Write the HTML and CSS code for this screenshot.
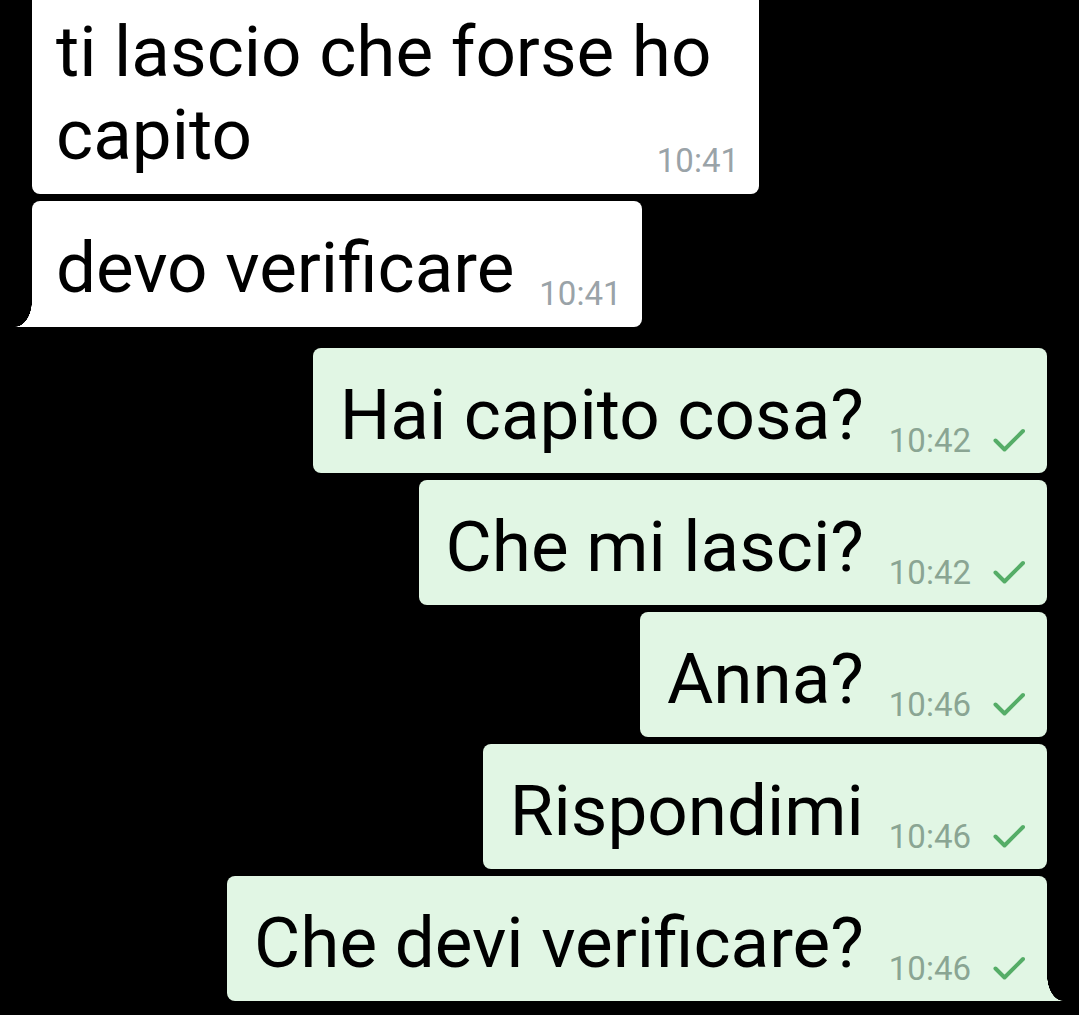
FILE: index.html
```html
<!DOCTYPE html>
<html>
<head>
  <meta charset="utf-8"/>
  <link rel="stylesheet" href="styles.css">
  <title>Chat</title>
</head>
<body>
  <div class="chat">
    <!-- incoming group -->
    <div class="bubble in first">
      <span class="text">ti lascio che forse ho capito</span><span class="meta"><span class="time">10:41</span></span>
    </div>
    <div class="bubble in tail">
      <span class="text">devo verificare</span><span class="meta"><span class="time">10:41</span></span>
    </div>

    <!-- outgoing group -->
    <div class="bubble out group-start">
      <span class="text">Hai capito cosa?</span><span class="meta"><span class="time">10:42</span><svg class="tick" width="32" height="24" viewBox="0 0 32 24"><path d="M2.5 12.5 L11.5 21.5 L30 3"/></svg></span>
    </div>
    <div class="bubble out">
      <span class="text">Che mi lasci?</span><span class="meta"><span class="time">10:42</span><svg class="tick" width="32" height="24" viewBox="0 0 32 24"><path d="M2.5 12.5 L11.5 21.5 L30 3"/></svg></span>
    </div>
    <div class="bubble out">
      <span class="text">Anna?</span><span class="meta"><span class="time">10:46</span><svg class="tick" width="32" height="24" viewBox="0 0 32 24"><path d="M2.5 12.5 L11.5 21.5 L30 3"/></svg></span>
    </div>
    <div class="bubble out">
      <span class="text">Rispondimi</span><span class="meta"><span class="time">10:46</span><svg class="tick" width="32" height="24" viewBox="0 0 32 24"><path d="M2.5 12.5 L11.5 21.5 L30 3"/></svg></span>
    </div>
    <div class="bubble out tail">
      <span class="text">Che devi verificare?</span><span class="meta"><span class="time">10:46</span><svg class="tick" width="32" height="24" viewBox="0 0 32 24"><path d="M2.5 12.5 L11.5 21.5 L30 3"/></svg></span>
    </div>
  </div>
</body>
</html>
```

FILE: styles.css
```css
html, body {
  margin: 0;
  background: #000;
  height: 100%;
  overflow: hidden;
}

.chat {
  display: flex;
  flex-flow: column;
  gap: 7px;
  font-family: Roboto, "Noto Sans", sans-serif;
}

.bubble {
  display: flow-root;   /* so the floated meta counts in the height */
  position: relative;   /* for the tail */
  padding: 25px 20px 14px 24px;
  border-radius: 8px;
  font-size: 71px;
  line-height: 83px;
  color: #000;
}

.bubble.in {
  align-self: flex-start;
  margin-left: 32px;
  max-width: 683px;
  background: #fff;
}

.bubble.out {
  align-self: flex-end;
  margin-right: 32px;
  padding-left: 27px;
  padding-right: 22px;
  padding-bottom: 13px;
  background: #e1f6e4;
}

.bubble.first {
  margin-top: -15px;
}

.bubble.group-start {
  margin-top: 14px; /* extra room between the two sides */
}

.meta {
  float: right;
  margin: 49px 0 0 25px;
  font-size: 33px;
  line-height: 38px;
  white-space: nowrap;
}

.in .time {
  color: #9aa3a8;
}

.out .time {
  color: #8aa593;
}

.tick {
  margin-left: 22px;
  vertical-align: baseline;
  fill: none;
  stroke: #55ad67;
  stroke-width: 4;
  stroke-linecap: round;
  stroke-linejoin: round;
}

/* tails on the last bubble of a group */
.bubble.in.tail {
  border-bottom-left-radius: 0;
}

.bubble.out.tail {
  border-bottom-right-radius: 0;
}

.bubble.tail::after {
  content: "";
  position: absolute;
  bottom: 0;
  width: 17px;
  height: 26px;
}

.bubble.in.tail::after {
  left: -17px;
  background: radial-gradient(ellipse 17px 26px at 0 0, transparent 98%, #fff 100%);
}

.bubble.out.tail::after {
  right: -16px;
  width: 16px;
  background: radial-gradient(ellipse 16px 26px at 100% 0, transparent 98%, #e1f6e4 100%);
}
```
